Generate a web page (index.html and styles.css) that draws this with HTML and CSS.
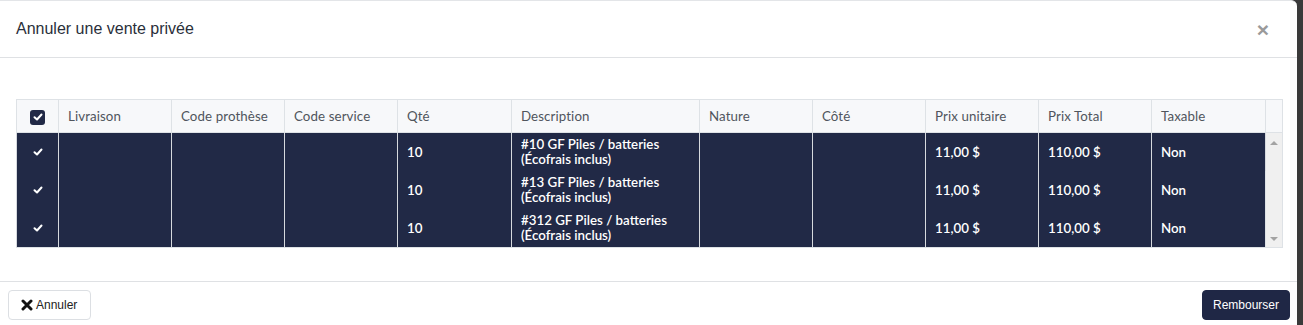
FILE: index.html
```html
<!DOCTYPE html>
<html lang="fr">
<head>
<meta charset="utf-8">
<link rel="stylesheet" href="styles.css">
</head>
<body>
<div class="page">
  <div class="modal">
    <div class="modal-header">
      <h1 class="modal-title">Annuler une vente privée</h1>
      <span class="close">×</span>
    </div>
    <div class="modal-body">
      <table class="grid">
        <colgroup>
          <col class="c-check"><col class="c-113"><col class="c-113"><col class="c-113"><col class="c-114"><col class="c-desc"><col class="c-113"><col class="c-113"><col class="c-113"><col class="c-113"><col class="c-114"><col class="c-scroll">
        </colgroup>
        <thead>
          <tr>
            <th class="check-cell"><span class="box"><svg width="10" height="8" viewBox="0 0 10 8"><path d="M1.5 4.2 L4 6.5 L8.5 1.5" fill="none" stroke="#fff" stroke-width="2" stroke-linecap="round" stroke-linejoin="round"/></svg></span></th>
            <th>Livraison</th>
            <th>Code prothèse</th>
            <th>Code service</th>
            <th>Qté</th>
            <th>Description</th>
            <th>Nature</th>
            <th>Côté</th>
            <th>Prix unitaire</th>
            <th>Prix Total</th>
            <th>Taxable</th>
            <th class="scroll-head"></th>
          </tr>
        </thead>
        <tbody>
          <tr class="r1">
            <td class="check-cell"><svg width="10" height="8" viewBox="0 0 10 8"><path d="M1.5 4.2 L4 6.5 L8.5 1.5" fill="none" stroke="#fff" stroke-width="2" stroke-linecap="round" stroke-linejoin="round"/></svg></td>
            <td></td><td></td><td></td>
            <td>10</td>
            <td class="desc">#10 GF Piles / batteries<br>(Écofrais inclus)</td>
            <td></td><td></td>
            <td>11,00 $</td>
            <td>110,00 $</td>
            <td>Non</td>
            <td class="scrollbar" rowspan="3">
              <div class="track">
                <span class="arrow up"></span>
                <span class="arrow down"></span>
              </div>
            </td>
          </tr>
          <tr>
            <td class="check-cell"><svg width="10" height="8" viewBox="0 0 10 8"><path d="M1.5 4.2 L4 6.5 L8.5 1.5" fill="none" stroke="#fff" stroke-width="2" stroke-linecap="round" stroke-linejoin="round"/></svg></td>
            <td></td><td></td><td></td>
            <td>10</td>
            <td class="desc">#13 GF Piles / batteries<br>(Écofrais inclus)</td>
            <td></td><td></td>
            <td>11,00 $</td>
            <td>110,00 $</td>
            <td>Non</td>
          </tr>
          <tr>
            <td class="check-cell"><svg width="10" height="8" viewBox="0 0 10 8"><path d="M1.5 4.2 L4 6.5 L8.5 1.5" fill="none" stroke="#fff" stroke-width="2" stroke-linecap="round" stroke-linejoin="round"/></svg></td>
            <td></td><td></td><td></td>
            <td>10</td>
            <td class="desc">#312 GF Piles / batteries<br>(Écofrais inclus)</td>
            <td></td><td></td>
            <td>11,00 $</td>
            <td>110,00 $</td>
            <td>Non</td>
          </tr>
        </tbody>
      </table>
    </div>
    <div class="modal-footer">
      <button class="btn btn-light"><svg width="12" height="12" viewBox="0 0 12 12"><path d="M2 2 L10 10 M10 2 L2 10" stroke="#111" stroke-width="3" stroke-linecap="round"/></svg>Annuler</button>
      <button class="btn btn-dark">Rembourser</button>
    </div>
  </div>
</div>
</body>
</html>
```
FILE: styles.css
```css
html, body {
  margin: 0;
  padding: 0;
}
body {
  background: #3a3a3a;
  width: 1303px;
  height: 325px;
  overflow: hidden;
}
.page {
  width: 1303px;
  height: 325px;
  display: flex;
  align-items: flex-start;
}
.modal {
  width: 1297px;
  height: 325px;
  background: #fff;
  border-top: 1px solid #e3e5e8;
  border-top-right-radius: 6px;
  box-sizing: border-box;
  display: flex;
  flex-direction: column;
  font-family: "Liberation Sans", Arial, sans-serif;
}
.modal-header {
  display: flex;
  align-items: center;
  justify-content: space-between;
  height: 56px;
  padding: 0 28px 0 16px;
  border-bottom: 1px solid #dfe1e4;
}
.modal-title {
  margin: 0;
  font-size: 16px;
  font-weight: 400;
  color: #2a2f3a;
  line-height: 24px;
}
.close {
  font-size: 21px;
  font-weight: 700;
  color: #9a9a9a;
  line-height: 1;
  margin-top: 1px;
}
.modal-body {
  height: 223px;
  padding: 41px 0 0 16px;
  box-sizing: border-box;
}
.grid {
  border-collapse: collapse;
  table-layout: fixed;
  width: 1266px;
  font-family: Lato, "Noto Sans", sans-serif;
  font-size: 13.3px;
}
.c-check { width: 42px; }
.c-113 { width: 113px; }
.c-114 { width: 114px; }
.c-desc { width: 188px; }
.c-scroll { width: 17px; }
.grid th {
  height: 32px;
  padding: 0 9px;
  background: #f7f8fa;
  border: 1px solid #dee2e6;
  text-align: left;
  font-weight: 400;
  color: #50555d;
  letter-spacing: 0.1px;
}
.grid td {
  height: 38px;
  padding: 0 9px;
  background: #212946;
  color: #fff;
  font-weight: 600;
  border-left: 1px solid #d6d9de;
  border-right: 1px solid #d6d9de;
  vertical-align: middle;
}
.grid tbody tr:last-child td {
  border-bottom: 1px solid #dee2e6;
}
.grid .desc {
  line-height: 15px;
}
.grid .check-cell {
  text-align: center;
  padding: 0;
}
.grid td.check-cell svg {
  display: block;
  margin: 0 auto;
}
.box {
  display: inline-flex;
  align-items: center;
  justify-content: center;
  width: 15px;
  height: 15px;
  border-radius: 3px;
  background: #212946;
  vertical-align: middle;
}
.grid th.scroll-head {
  padding: 0;
  background: #f7f8fa;
}
.grid td.scrollbar {
  padding: 0;
  background: #f0f0f0;
  border: 1px solid #dee2e6;
}
.track {
  height: 114px;
  display: flex;
  flex-direction: column;
  justify-content: space-between;
  align-items: center;
  padding: 8px 0 6px;
  box-sizing: border-box;
}
.arrow {
  width: 0;
  height: 0;
  border-left: 4px solid transparent;
  border-right: 4px solid transparent;
}
.arrow.up {
  border-bottom: 4px solid #a3a3a3;
}
.arrow.down {
  border-top: 4px solid #a3a3a3;
}
.modal-footer {
  flex: 1;
  border-top: 1px solid #dfe1e4;
  display: flex;
  justify-content: space-between;
  align-items: flex-start;
  padding: 8px 7px 0 8px;
}
.btn {
  height: 30px;
  border-radius: 4px;
  font-family: "Liberation Sans", Arial, sans-serif;
  font-size: 12px;
  display: inline-flex;
  align-items: center;
  gap: 3px;
  cursor: pointer;
}
.btn-light {
  width: 83px;
  background: #fff;
  border: 1px solid #dcdfe3;
  color: #222;
  padding: 0 0 0 12px;
}
.btn-dark {
  width: 88px;
  background: #1f2745;
  border: 1px solid #1f2745;
  color: #fff;
  justify-content: center;
  padding: 0;
}
```
